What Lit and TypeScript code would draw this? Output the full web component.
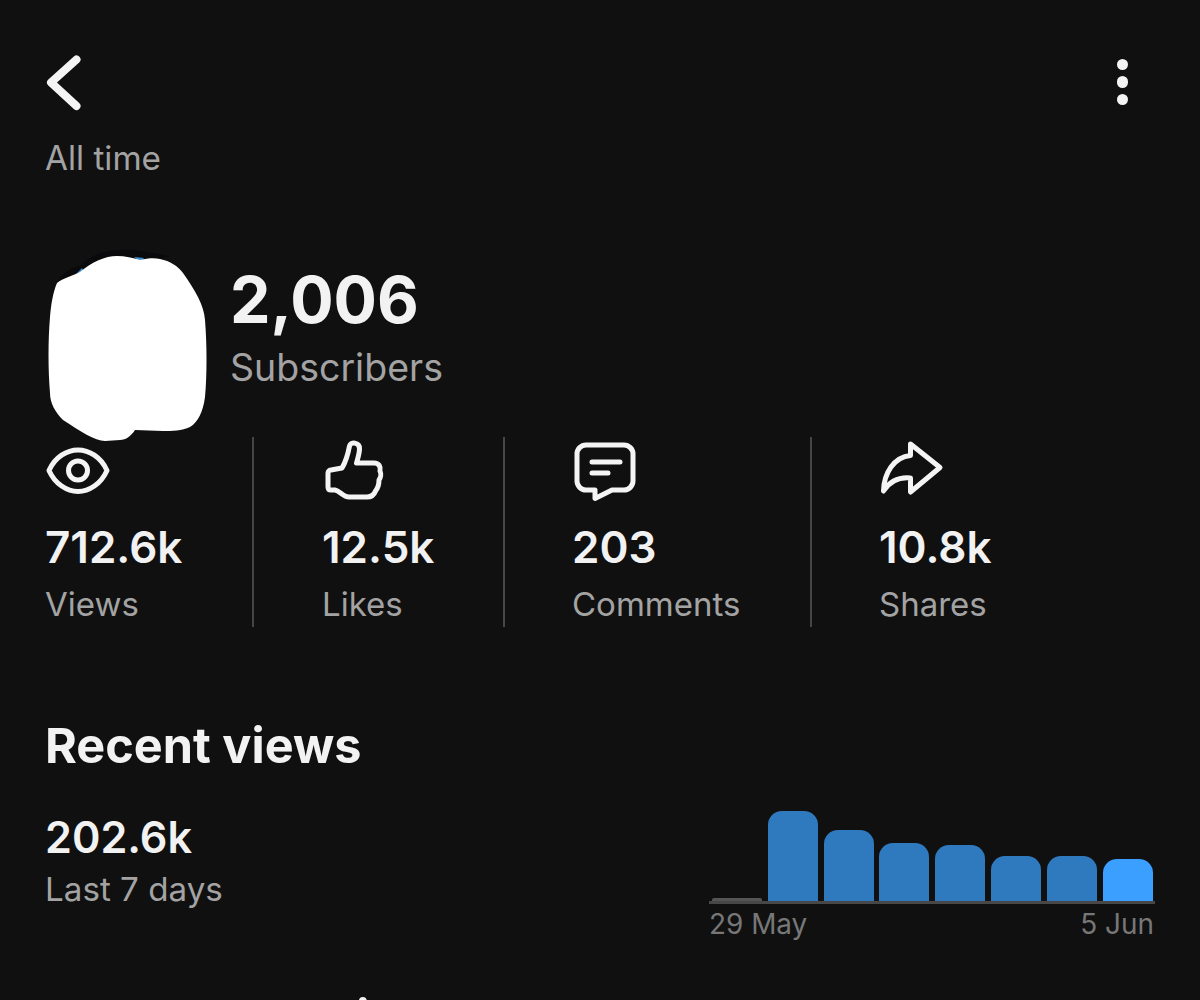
import { LitElement, html, css, svg } from "lit";
import { customElement } from "lit/decorators.js";

const stats = [
  { value: "712.6k", label: "Views", icon: svg`<svg class="ic" viewBox="0 0 70 70"><path d="M4 33.500 C10 20 22 13 33 13 C44 13 56 20 62 33.500 C56 47 44 54.500 33 54.500 C22 54.500 10 47 4 33.500Z"/><circle cx="33" cy="33.500" r="9.500"/></svg>` },
  { value: "12.5k", label: "Likes", icon: svg`<svg class="ic" viewBox="0 0 70 70"><path d="M11 33 L22 31 C25 26 28 17 29.500 9 C30.500 4.500 39.500 5 39.500 11.500 C39.500 17 37.500 22 36.500 26 L54 26 C59 26 61 30 60 34 C61.500 37 60.500 41 59 43 C59 47 58 51 55.500 54 C54 58 51 60 47 60 L29 60 C23 60 20 54 15 53 L11 53 C9 53 8 52 8 50 L8 36 C8 34 9.500 33 11 33Z"/></svg>` },
  { value: "203", label: "Comments", icon: svg`<svg class="ic" viewBox="0 0 70 70"><path d="M16 8 H54 A9 9 0 0 1 63 17 V44 A9 9 0 0 1 54 53 H42 L25 61.500 V53 H16 A9 9 0 0 1 7 44 V17 A9 9 0 0 1 16 8Z"/><path d="M22 25 H50 M22 36 H38"/></svg>` },
  { value: "10.8k", label: "Shares", icon: svg`<svg class="ic" viewBox="0 0 70 70"><path d="M33.500 7 L63 30.500 L33.500 55 V41 C23 40 13 44 6.500 54 C7 36 17 20 33.500 18.500Z"/></svg>` },
];

const bars = [3, 90, 71, 58, 56, 45, 45, 42];

@customElement("app-root")
export class AppRoot extends LitElement {
  static styles = css`
    :host { display: block; width: 1200px; height: 1000px; overflow: hidden; background: #101011; color: #f2f2f2; font-family: Inter, "Liberation Sans", sans-serif; }
    .page { padding: 52px 45px 0; }
    .head { display: flex; justify-content: space-between; align-items: center; height: 60px; padding-right: 27px; }
    .back { width: 40px; height: 60px; display: block; margin-left: 1px; }
    .back path { fill: none; stroke: #f4f4f4; stroke-width: 8; stroke-linecap: round; stroke-linejoin: round; }
    .dots { display: flex; flex-direction: column; gap: 5.800px; }
    .dots i { width: 11.500px; height: 11.500px; border-radius: 50%; background: #f4f4f4; display: block; }
    .range { margin-top: 27px; font-size: 33.300px; line-height: 38px; color: #a3a3a3; }
    .profile { position: relative; margin-top: 87px; height: 173px; display: flex; align-items: flex-start; }
    .avatar { position: absolute; left: -5px; top: -19px; width: 176px; height: 200px; display: block; overflow: visible; }
    .who { margin-left: 185px; }
    .count { font-size: 64.400px; line-height: 72px; font-weight: 700; }
    .sub { font-size: 37.500px; line-height: 44px; color: #a3a3a3; margin-top: 10px; }
    .stats { display: grid; grid-template-columns: 209px 251px 307px 1fr; height: 190px; }
    .stat { border-right: 2px solid #464646; padding-left: 67px; }
    .stat:first-child { padding-left: 0; }
    .stat:nth-child(2) { padding-left: 68px; }
    .stat:last-child { border-right: 0; }
    .ic { display: block; width: 70px; height: 70px; margin: 0 0 0 -2px; fill: none; stroke: #f4f4f4; stroke-width: 5; stroke-linecap: round; stroke-linejoin: round; }
    .stat:first-child .ic { margin-left: 0; }
    .val { font-size: 44px; line-height: 54px; font-weight: 600; margin-top: 13px; }
    .lab { font-size: 33px; line-height: 40px; color: #a3a3a3; margin-top: 10px; }
    h2 { margin: 90px 0 0; font-size: 48.600px; line-height: 58px; font-weight: 700; }
    .recent { display: flex; justify-content: space-between; margin-top: 37px; }
    .big { font-size: 43.200px; line-height: 50px; font-weight: 600; }
    .small { font-size: 33.200px; line-height: 38px; color: #a3a3a3; margin-top: 8px; }
    .chart { width: 446px; margin-top: -1px; }
    .plot { display: flex; align-items: flex-end; gap: 5.800px; height: 90px; padding-left: 3px; border-bottom: 3px solid #474747; }
    .bar { width: 50px; background: #2f7abf; border-radius: 14px 14px 0 0; }
    .bar.zero { background: #555; border-radius: 2px 2px 0 0; }
    .bar.now { background: #3a9fff; }
    .axis { display: flex; justify-content: space-between; font-size: 27.900px; line-height: 34px; color: #777; margin-top: 3px; padding: 0 1px 0 0; }
    h2.next { margin-top: 48px; }
  `;

  render() {
    return html`<div class="page">
      <div class="head">
        <svg class="back" viewBox="0 0 40 60"><path d="M30.500 7.500 L5 30.500 L30.500 54"/></svg>
        <div class="dots"><i></i><i></i><i></i></div>
      </div>
      <div class="range">All time</div>
      <div class="profile">
        <svg class="avatar" viewBox="40 245 176 200">
          <path d="M52 300 C54 280 66 268 80 266 C92 252 115 248 135 250 L170 256 L120 270 Z" fill="#0a0a0c"/>
          <path d="M76 274 L82 268 L84 272Z M134 257 L144 258 L140 262Z" fill="#3f8fcf"/>
          <path fill="#fff" d="M80 272 C92 262 105 256 117 256 C125 256 133 258 140 260 C148 258 155 258 160 259 C170 261 178 266 183 273 C195 290 204 305 205 320 C207 345 207 375 205 397 C203 412 198 422 190 427 C182 431 172 431 163 431 L135 430 C131 436 126 440 120 440 L105 441 C95 441 80 431 63 420 C55 412 50 403 50 393 C48 370 48 340 50 317 C51 305 53 292 57 283 C63 278 72 276 80 272Z"/>
        </svg>
        <div class="who">
          <div class="count">2,006</div>
          <div class="sub">Subscribers</div>
        </div>
      </div>
      <div class="stats">
        ${stats.map((s) => html`<div class="stat">${s.icon}<div class="val">${s.value}</div><div class="lab">${s.label}</div></div>`)}
      </div>
      <h2>Recent views</h2>
      <div class="recent">
        <div><div class="big">202.6k</div><div class="small">Last 7 days</div></div>
        <div class="chart">
          <div class="plot">
            ${bars.map((h, i) => html`<div class="bar ${i === 0 ? "zero" : i === bars.length - 1 ? "now" : ""}" style="height:${h}px"></div>`)}
          </div>
          <div class="axis"><span>29 May</span><span>5 Jun</span></div>
        </div>
      </div>
      <h2 class="next">Engagement in</h2>
    </div>`;
  }
}
